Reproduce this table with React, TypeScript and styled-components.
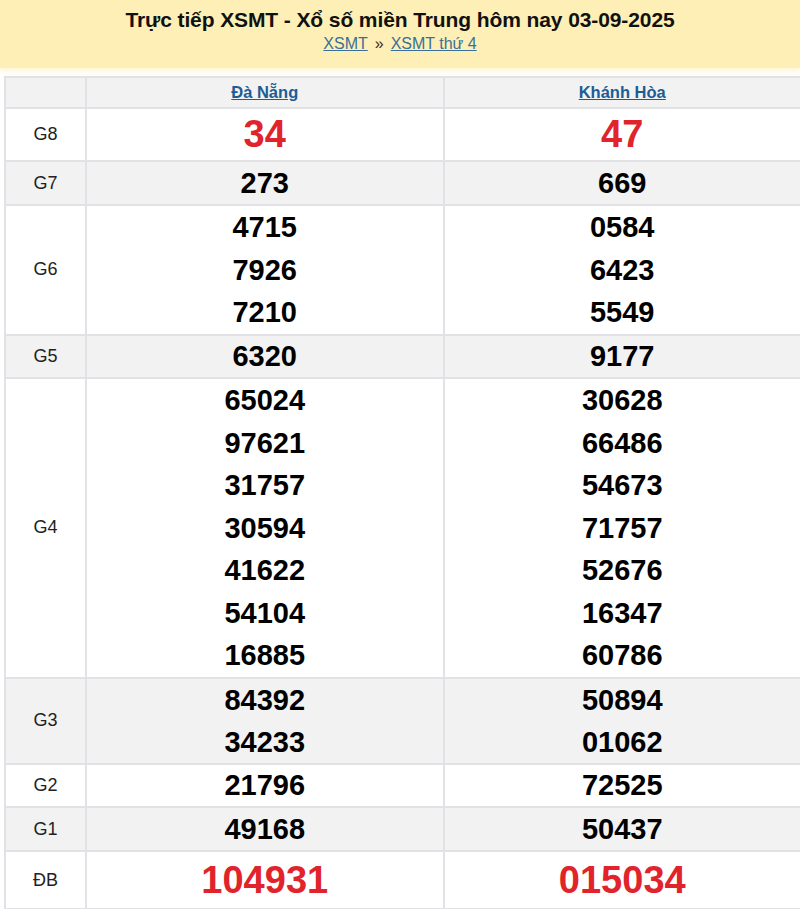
import React from "react";
import styled, { createGlobalStyle } from "styled-components";

const Global = createGlobalStyle`
  html, body { margin: 0; padding: 0; background: #fff; overflow-x: hidden; }
  body { font-family: Arial, "Liberation Sans", sans-serif; color: #222; }
`;

const Page = styled.div`
  width: 800px;
  overflow: hidden;
`;

const Banner = styled.header`
  height: 68px;
  background: #fdefb5;
  box-shadow: 0 3px 6px rgba(253, 239, 181, 0.6);
  display: flex;
  flex-direction: column;
  align-items: center;
  padding-top: 6px;
  box-sizing: border-box;
`;

const Title = styled.h1`
  margin: 0;
  font-size: 21px;
  line-height: 27px;
  font-weight: bold;
  color: #111;
  letter-spacing: -0.1px;
`;

const Crumbs = styled.div`
  font-size: 16px;
  line-height: 22px;
  color: #333;
  display: flex;
  gap: 7px;
  align-items: center;
`;

const Crumb = styled.a`
  color: #3a6f9a;
  text-decoration: underline;
`;

const TableWrap = styled.div`
  padding: 8px 0 0 4px;
`;

const Table = styled.table`
  border-collapse: collapse;
  width: 798px;
  table-layout: fixed;
`;

const Row = styled.tr<{ $alt?: boolean }>`
  background: ${(p) => (p.$alt ? "#f2f2f2" : "#fff")};
`;

const LabelCell = styled.td`
  border: 2px solid #e2e2e6;
  text-align: center;
  vertical-align: middle;
  font-size: 18px;
  color: #222;
  padding: 0;
`;

const HeadCell = styled.th`
  border: 2px solid #e2e2e6;
  text-align: center;
  line-height: 29px;
  font-size: 16.5px;
  font-weight: bold;
  padding: 0;
`;

const HeadLink = styled.a`
  color: #1d5c96;
  text-decoration: underline;
`;

const NumCell = styled.td<{ $big?: boolean; $lh: number }>`
  border: 2px solid #e2e2e6;
  text-align: center;
  padding: 0;
  font-weight: bold;
  font-size: ${(p) => (p.$big ? "38px" : "29px")};
  line-height: ${(p) => p.$lh}px;
  color: ${(p) => (p.$big ? "#e1242b" : "#000")};
`;

const Num = styled.div``;

type Prize = { label: string; a: string[]; b: string[]; big?: boolean; lh: number };

const prizes: Prize[] = [
  { label: "G8", a: ["34"], b: ["47"], big: true, lh: 51 },
  { label: "G7", a: ["273"], b: ["669"], lh: 42 },
  { label: "G6", a: ["4715", "7926", "7210"], b: ["0584", "6423", "5549"], lh: 42.5 },
  { label: "G5", a: ["6320"], b: ["9177"], lh: 41.5 },
  {
    label: "G4",
    a: ["65024", "97621", "31757", "30594", "41622", "54104", "16885"],
    b: ["30628", "66486", "54673", "71757", "52676", "16347", "60786"],
    lh: 42.5,
  },
  { label: "G3", a: ["84392", "34233"], b: ["50894", "01062"], lh: 42.2 },
  { label: "G2", a: ["21796"], b: ["72525"], lh: 41.5 },
  { label: "G1", a: ["49168"], b: ["50437"], lh: 42 },
  { label: "ĐB", a: ["104931"], b: ["015034"], big: true, lh: 56 },
];

export default function App() {
  return (
    <Page>
      <Global />
      <Banner>
        <Title>Trực tiếp XSMT - Xổ số miền Trung hôm nay 03-09-2025</Title>
        <Crumbs>
          <Crumb href="#">XSMT</Crumb>
          <span>»</span>
          <Crumb href="#">XSMT thứ 4</Crumb>
        </Crumbs>
      </Banner>
      <TableWrap>
        <Table>
          <colgroup>
            <col style={{ width: 81 }} />
            <col />
            <col />
          </colgroup>
          <thead>
            <Row $alt>
              <HeadCell />
              <HeadCell>
                <HeadLink href="#">Đà Nẵng</HeadLink>
              </HeadCell>
              <HeadCell>
                <HeadLink href="#">Khánh Hòa</HeadLink>
              </HeadCell>
            </Row>
          </thead>
          <tbody>
            {prizes.map((p, i) => (
              <Row key={p.label} $alt={i % 2 === 1}>
                <LabelCell>{p.label}</LabelCell>
                <NumCell $big={p.big} $lh={p.lh}>
                  {p.a.map((n) => (
                    <Num key={n}>{n}</Num>
                  ))}
                </NumCell>
                <NumCell $big={p.big} $lh={p.lh}>
                  {p.b.map((n) => (
                    <Num key={n}>{n}</Num>
                  ))}
                </NumCell>
              </Row>
            ))}
          </tbody>
        </Table>
      </TableWrap>
    </Page>
  );
}
